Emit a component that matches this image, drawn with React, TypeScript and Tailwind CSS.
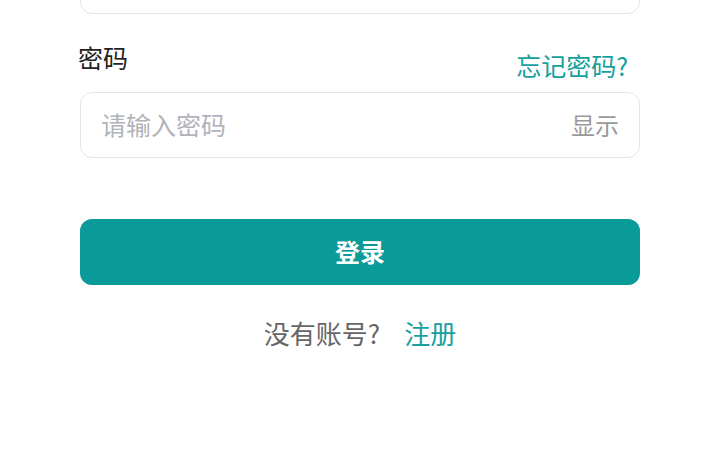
import { useState } from "react";

const FONT = { fontFamily: '"Noto Sans CJK SC", "Noto Sans", sans-serif' };

export default function App() {
  const [show, setShow] = useState(false);
  const [pwd, setPwd] = useState("");

  return (
    <div className="min-h-[450px] bg-white overflow-hidden" style={FONT}>
      <div className="w-[560px] mx-auto">
        {/* account input, scrolled mostly out of view */}
        <div className="-mt-[52px] h-[66px] rounded-[12px] border border-[#e3e5e8] bg-white" />

        <div className="mt-[27px] h-[40px] flex justify-between">
          <label className="-ml-[2px] self-start text-[25px] leading-[32px] text-[#222]">密码</label>
          <a href="#" className="mr-[12px] self-end text-[25px] leading-[32px] text-[#15a09e]">
            忘记密码?
          </a>
        </div>

        <div className="mt-[11px] h-[66px] rounded-[12px] border border-[#e3e5e8] flex items-center pl-[20px] pr-[20px]">
          <input
            type={show ? "text" : "password"}
            value={pwd}
            onChange={(e) => setPwd(e.target.value)}
            placeholder="请输入密码"
            className="flex-1 outline-none text-[25px] text-[#333] placeholder:text-[#b0b3ba] bg-transparent"
            style={FONT}
          />
          <button
            onClick={() => setShow((s) => !s)}
            className="text-[24px] text-[#9a9a9a]"
            style={FONT}
          >
            显示
          </button>
        </div>

        <button
          className="mt-[61px] w-full h-[66px] rounded-[12px] bg-[#0a9a98] text-white text-[25px] font-bold"
          style={FONT}
        >
          登录
        </button>

        <div className="mt-[32px] flex justify-center items-center gap-[24px] text-[26px] leading-[32px]">
          <span className="text-[#666]">没有账号?</span>
          <a href="#" className="text-[#15a09e]">注册</a>
        </div>
      </div>
    </div>
  );
}
